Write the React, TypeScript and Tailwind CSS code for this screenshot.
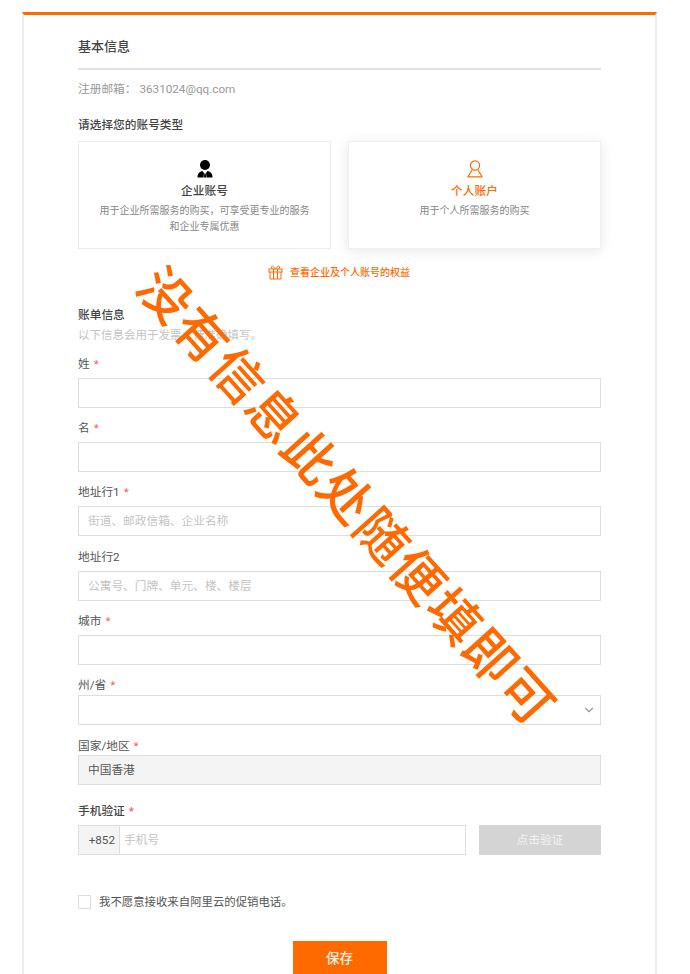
import { ChevronDown } from "lucide-react"

const inputCls =
  "block w-full h-[30px] border border-[#dedede] bg-white px-[9px] text-[11.7px] outline-none placeholder:text-[#c4c4c4]"

function Star() {
  return <span className="ml-1 text-[#f0625a]">*</span>
}

function Field({ label, required, placeholder }: { label: string; required?: boolean; placeholder?: string }) {
  return (
    <div className="mb-[10.4px]">
      <div className="mb-[4px] h-5 text-[11.7px] leading-5 text-[#555]">
        {label}
        {required && <Star />}
      </div>
      <input className={inputCls} placeholder={placeholder} />
    </div>
  )
}

function BusinessIcon() {
  return (
    <svg width="16" height="18" viewBox="0 0 16 18" fill="#000">
      <circle cx="8" cy="5" r="5" />
      <path d="M0.5 17.500 C0.500 13.500 2.500 11.500 5.500 11 L7 13 L6.500 17.500 Z" />
      <path d="M15.500 17.500 C15.500 13.500 13.500 11.500 10.500 11 L9 13 L9.500 17.500 Z" />
      <path d="M7.300 13.500 H8.700 L9.100 17.500 H6.900 Z" />
    </svg>
  )
}

function PersonIcon() {
  return (
    <svg width="16" height="18" viewBox="0 0 16 18" fill="none" stroke="#ff6a00" strokeWidth="1.200">
      <circle cx="8" cy="5.500" r="4.600" />
      <path d="M5 10 L1 16.800 H15 L11 10" strokeLinejoin="round" />
    </svg>
  )
}

function GiftIcon() {
  return (
    <svg width="15" height="15" viewBox="0 0 15 15" fill="none" stroke="#ff6a00" strokeWidth="1">
      <rect x="1" y="4" width="13" height="3" />
      <path d="M2 7 V14 H13 V7" />
      <path d="M5.500 4 V14 M9.500 4 V14" />
      <path d="M7.500 4 L4.500 0.800 L3.200 2 L4.500 4 M7.500 4 L10.500 0.800 L11.800 2 L10.500 4" />
    </svg>
  )
}

export default function App() {
  return (
    <div className="relative h-[974px] w-[690px] overflow-hidden bg-white pt-3 font-['Roboto','Noto_Sans_CJK_SC',sans-serif]">
      <div className="ml-[22px] h-[962px] w-[635px] border-x-2 border-t-[3px] border-x-[#ececec] border-t-[#ff6a00] px-[54px]">
        <h2 className="mt-[22px] h-5 text-[13px] font-medium leading-5 text-[#444]">基本信息</h2>
        <div className="mt-[11px] h-[1.500px] bg-[#e2e2e2]" />
        <p className="mt-[9px] h-5 text-[11.7px] leading-5 text-[#999]">
          注册邮箱：
          <span className="ml-[3px]">3631024@qq.com</span>
        </p>
        <p className="mt-[16px] h-5 text-[11.7px] font-medium leading-5 text-[#444]">请选择您的账号类型</p>

        <div className="mt-[6px] flex justify-between">
          <div className="flex h-[108px] w-[253px] flex-col items-center border border-[#ececec] pt-[18px]">
            <BusinessIcon />
            <p className="mt-[5px] text-[11.7px] font-medium leading-4 text-[#444]">企业账号</p>
            <p className="mt-[4px] w-[212px] text-center text-[10px] leading-[16px] text-[#888]">
              用于企业所需服务的购买，可享受更专业的服务和企业专属优惠
            </p>
          </div>
          <div className="flex h-[108px] w-[253px] flex-col items-center border border-[#f0f0f0] pt-[18px] shadow-[0_2px_12px_rgba(0,0,0,0.1)]">
            <PersonIcon />
            <p className="mt-[5px] text-[11.7px] font-medium leading-4 text-[#ff6a00]">个人账户</p>
            <p className="mt-[4px] text-[10px] leading-[16px] text-[#888]">用于个人所需服务的购买</p>
          </div>
        </div>

        <div className="mt-[16px] flex h-4 items-center justify-center gap-[7px] pr-[1px]">
          <GiftIcon />
          <span className="text-[10px] font-medium text-[#ff6a00]">查看企业及个人账号的权益</span>
        </div>

        <p className="mt-[24px] h-5 text-[11.7px] font-medium leading-5 text-[#444]">账单信息</p>
        <p className="h-5 text-[11.5px] leading-5 text-[#c4c4c4]">以下信息会用于发票，请准确填写。</p>

        <div className="mt-[9px]">
          <Field label="姓" required />
          <Field label="名" required />
          <Field label="地址行1" required placeholder="街道、邮政信箱、企业名称" />
          <Field label="地址行2" placeholder="公寓号、门牌、单元、楼、楼层" />
          <Field label="城市" required />
        </div>

        <div className="h-5 text-[11.7px] leading-5 text-[#555]">
          州/省
          <Star />
        </div>
        <div className="relative">
          <div className="h-[30px] border border-[#dedede] bg-white" />
          <ChevronDown className="absolute right-[5px] top-[8px] text-[#999]" size={14} />
        </div>

        <div className="mt-[11px] h-[19px] text-[11.7px] leading-5 text-[#555]">
          国家/地区
          <Star />
        </div>
        <div className="flex h-[30px] items-center border border-[#dedede] bg-[#f4f4f4] px-[9px] text-[11.7px] text-[#555]">
          中国香港
        </div>

        <div className="mt-[16px] h-5 text-[11.7px] font-medium leading-5 text-[#444]">
          手机验证
          <Star />
        </div>
        <div className="mt-[4px] flex h-[30px] justify-between">
          <div className="flex w-[388px] border border-[#dedede]">
            <span className="flex w-[41px] items-center justify-end border-r border-[#dedede] bg-[#f4f4f4] pr-1 text-[11.7px] text-[#555]">
              +852
            </span>
            <span className="flex items-center pl-1 text-[11.7px] text-[#c4c4c4]">手机号</span>
          </div>
          <button className="w-[122px] bg-[#d4d4d4] text-[11.7px] text-[#f2f2f2]">点击验证</button>
        </div>

        <label className="mt-[40px] flex h-[14px] items-center gap-[8px] text-[11.4px] text-[#555]">
          <span className="h-[14px] w-[13px] border border-[#dedede]" />
          我不愿意接收来自阿里云的促销电话。
        </label>

        <div className="mt-[32px] flex justify-center">
          <button className="h-[33px] w-[94px] bg-[#ff6a00] text-[13.5px] font-medium text-[#fbeee4]">保存</button>
        </div>
      </div>

      <div className="pointer-events-none absolute left-[345px] top-[498px] -translate-x-1/2 -translate-y-1/2 rotate-[48deg] whitespace-nowrap text-[52px] font-medium leading-none tracking-[2px] text-[#ff6a00]">
        没有信息此处随便填即可
      </div>
    </div>
  )
}
